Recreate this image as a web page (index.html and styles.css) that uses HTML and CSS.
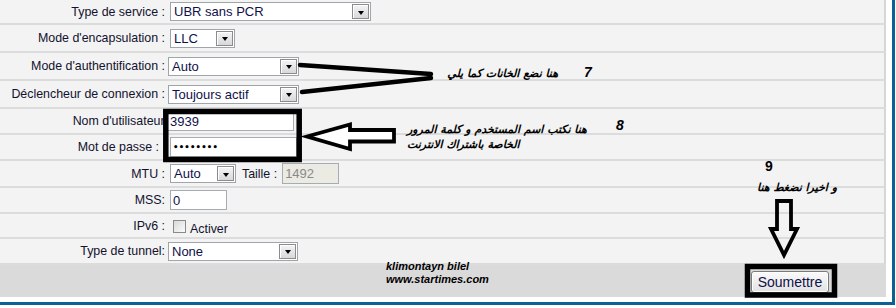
FILE: index.html
```html
<!DOCTYPE html>
<html lang="fr">
<head>
<meta charset="utf-8">
<title>WAN</title>
<link rel="stylesheet" href="styles.css">
</head>
<body>
<div class="frame">
  <div class="panel">
    <div class="row h23"><div class="lbl">Type de service :</div><div class="fld"><span class="sel w201">UBR sans PCR<i class="dd"></i></span></div></div>
    <div class="row h26"><div class="lbl">Mode d'encapsulation :</div><div class="fld"><span class="sel w65">LLC<i class="dd"></i></span></div></div>
    <div class="row h26"><div class="lbl">Mode d'authentification :</div><div class="fld"><span class="sel w131 sh">Auto<i class="dd"></i></span></div></div>
    <div class="row h26"><div class="lbl">Déclencheur de connexion :</div><div class="fld"><span class="sel w131 sh">Toujours actif<i class="dd"></i></span></div></div>
    <div class="row h24"><div class="lbl wide">Nom d'utilisateur:</div><div class="fld"><span class="txt w127">3939</span></div></div>
    <div class="row h24"><div class="lbl pad">Mot de passe :</div><div class="fld"><span class="txt w127 pw">••••••••</span></div></div>
    <div class="row h25"><div class="lbl">MTU :</div><div class="fld"><span class="sel w66">Auto<i class="dd"></i></span><span class="sub">Taille :</span><span class="txt w57 dis">1492</span></div></div>
    <div class="row h24"><div class="lbl">MSS:</div><div class="fld"><span class="txt w57">0</span></div></div>
    <div class="row h23"><div class="lbl">IPv6 :</div><div class="fld"><span class="chk"></span><span class="chklbl">Activer</span></div></div>
    <div class="row h24"><div class="lbl">Type de tunnel:</div><div class="fld"><span class="sel w130 sh">None<i class="dd"></i></span></div></div>
    <div class="footer"><button class="submit" type="button">Soumettre</button></div>
  </div>
</div>

<svg class="marks" width="896" height="308" viewBox="0 0 896 308" xmlns="http://www.w3.org/2000/svg">
  <path d="M300 65 L431 74" stroke="#000" stroke-width="4.5" stroke-linecap="round" fill="none"/>
  <path d="M302 92 L431 78" stroke="#000" stroke-width="4.5" stroke-linecap="round" fill="none"/>
  <rect x="165.8" y="111.5" width="133.4" height="48" fill="none" stroke="#000" stroke-width="5.5"/>
  <polygon points="307,136.5 350,124.5 350,130 394,130 394,141.5 350,141.5 350,149" fill="#fff" stroke="#000" stroke-width="3.8" stroke-linejoin="miter"/>
  <polygon points="777,201 791,201 791,229 797,229 784,255 771,229 777,229" fill="none" stroke="#000" stroke-width="3.8" stroke-linejoin="miter"/>
  <rect x="747.5" y="266.5" width="87" height="28.5" fill="none" stroke="#000" stroke-width="5.5"/>
</svg>

<div class="note num n7">7</div>
<div class="note ar a7" dir="rtl">هنا نضع الخانات كما يلي</div>
<div class="note num n8">8</div>
<div class="note ar a8" dir="rtl">هنا نكتب اسم المستخدم و كلمة المرور<br>الخاصة باشتراك الانترنت</div>
<div class="note num n9">9</div>
<div class="note ar a9" dir="rtl">و اخيرا نضغط هنا</div>
<div class="note sig">klimontayn bilel<br>www.startimes.com</div>
</body>
</html>
```
FILE: styles.css
```css
html, body {
  margin: 0;
  padding: 0;
  background: #fff;
}
body {
  width: 896px;
  height: 308px;
  overflow: hidden;
  position: relative;
  font-family: "Liberation Sans", Arial, sans-serif;
  color: #12122e;
}
.frame {
  width: 892px;
  height: 302px;
  border-right: 3px solid #0c6194;
  border-bottom: 3px solid #0c6194;
  background: #fff;
}
.panel {
  width: 886px;
}
.row {
  display: flex;
  align-items: center;
  background: #f3f3f3;
  border-bottom: 2px solid #dcdcdc;
  border-right: 2px solid #d6d6d6;
}
.h23 { height: 23px; }
.h24 { height: 24px; }
.h25 { height: 25px; }
.h26 { height: 26px; }
.lbl {
  box-sizing: border-box;
  width: 165px;
  flex: none;
  text-align: right;
  font-size: 12.4px;
  white-space: nowrap;
}
.lbl.wide { margin-right: -3px; width: 168px; }
.lbl.pad { padding-right: 6px; }
.lbl.wide + .fld { padding-left: 2px; }
.fld {
  display: flex;
  align-items: center;
  padding-left: 5px;
  font-size: 13px;
}
.sel {
  box-sizing: border-box;
  height: 19px;
  display: flex;
  align-items: center;
  justify-content: space-between;
  background: #fff;
  border: 1px solid #9ea5ab;
  padding-left: 3px;
  font-size: 13px;
  color: #10104a;
}
.sel.sh { margin-left: -2px; }
.w201 { width: 201px; }
.w65 { width: 65px; }
.w66 { width: 66px; }
.w131 { width: 131px; }
.w130 { width: 130px; }
.w127 { width: 127px; }
.w57 { width: 57px; }
.dd {
  box-sizing: border-box;
  width: 17px;
  height: 15px;
  margin-right: 1px;
  border: 1px solid #8c8c8c;
  background: linear-gradient(#f4f4f4, #d8d8d8);
  box-shadow: inset 1px 1px 0 #fff;
  display: flex;
  align-items: center;
  justify-content: center;
}
.dd::after {
  content: "";
  display: block;
  margin-top: 2px;
  border-left: 3.5px solid transparent;
  border-right: 3.5px solid transparent;
  border-top: 4px solid #000;
}
.txt {
  box-sizing: border-box;
  height: 20px;
  display: flex;
  align-items: center;
  background: #fff;
  border: 1px solid #a5acb2;
  padding-left: 2px;
  font-size: 13px;
  color: #10104a;
}
.txt.pw {
  font-size: 8.5px;
  letter-spacing: 0.2px;
  font-family: "DejaVu Sans", sans-serif;
  font-weight: bold;
  color: #000;
}
.txt.dis {
  background: #ebebe4;
  color: #8a8a8a;
  height: 21px;
}
.sub {
  font-size: 12.4px;
  margin: 0 5px 0 6px;
}
.chk {
  box-sizing: border-box;
  width: 13px;
  height: 13px;
  margin-left: 3px;
  margin-top: 2px;
  border: 1px solid #8a8a8a;
  background: linear-gradient(135deg, #d9d9d9, #fbfbfb);
}
.chklbl {
  font-size: 12.4px;
  margin-left: 4px;
  margin-top: 6px;
}
.footer {
  height: 32px;
  background: #dadada;
  display: flex;
  align-items: center;
  justify-content: flex-end;
  padding-right: 57px;
}
.submit {
  box-sizing: border-box;
  width: 78px;
  height: 22px;
  margin-top: 1px;
  padding: 0;
  font-family: "Liberation Sans", Arial, sans-serif;
  font-size: 14px;
  color: #10104a;
  border: 1px solid #7a7a7a;
  border-radius: 3px;
  background: linear-gradient(#fafafa, #e2e2e2);
  box-shadow: inset 0 0 0 1px #fff;
}
.marks {
  position: absolute;
  left: 0;
  top: 0;
  pointer-events: none;
}
.note {
  position: absolute;
  color: #000;
  white-space: nowrap;
}
.num {
  font-family: "Liberation Sans", Arial, sans-serif;
  font-weight: bold;
  font-size: 14px;
  font-style: italic;
}
.n7 { left: 584px; top: 64px; }
.n8 { left: 616px; top: 117px; }
.n9 { left: 765px; top: 158px; font-style: normal; }
.ar {
  font-family: "DejaVu Sans", sans-serif;
  font-weight: bold;
  font-style: italic;
  font-size: 11px;
  line-height: 15px;
  text-align: right;
}
.a7 { right: 338px; top: 66px; }
.a8 { left: 407px; top: 122px; text-align: left; }
.a9 { right: 59px; top: 180px; }
.sig {
  left: 386px;
  top: 260px;
  font-family: "Liberation Sans", Arial, sans-serif;
  font-weight: bold;
  font-style: italic;
  font-size: 11px;
  line-height: 13px;
}
```
